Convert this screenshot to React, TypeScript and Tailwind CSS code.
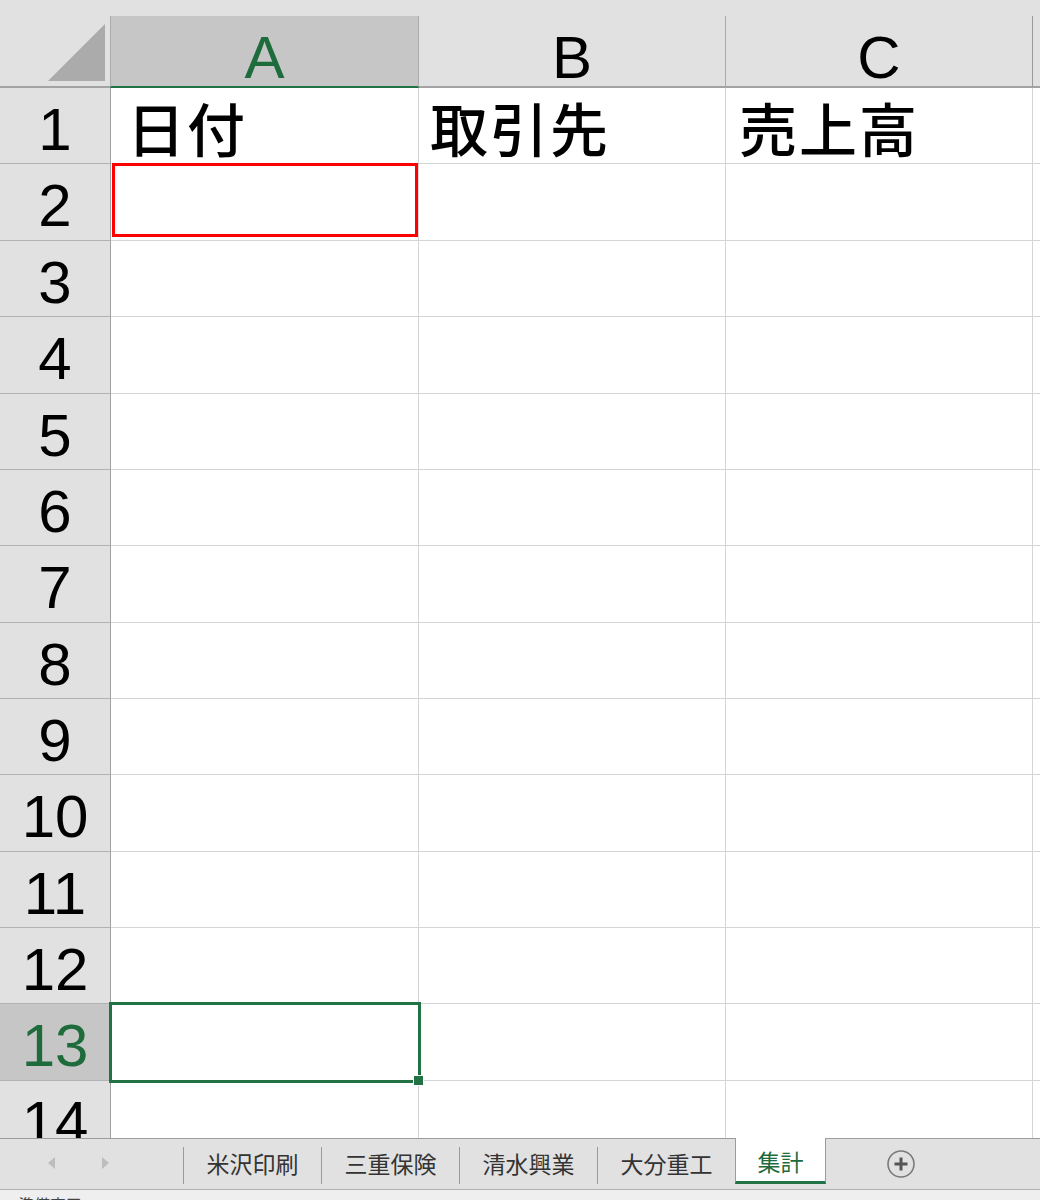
import React from "react";

const rowHeights = [
  "h-[76px]",
  "h-[77px]",
  "h-[76px]",
  "h-[77px]",
  "h-[76px]",
  "h-[76px]",
  "h-[77px]",
  "h-[76px]",
  "h-[76px]",
  "h-[77px]",
  "h-[76px]",
  "h-[76px]",
  "h-[77px]",
  "h-[77px]",
];

const tabs = ["米沢印刷", "三重保険", "清水興業", "大分重工"];

const cjk = "font-['Noto_Sans_CJK_JP',sans-serif]";

function Cell({
  width,
  children,
  overlay,
}: {
  width: string;
  children?: React.ReactNode;
  overlay?: React.ReactNode;
}) {
  return (
    <div
      className={`${width} shrink-0 h-full border-r border-b border-[#d4d4d4] bg-white relative flex items-center pl-[11px] pt-[3px]`}
    >
      {children}
      {overlay}
    </div>
  );
}

const cellText = `${cjk} text-[58px] leading-[66px] font-medium tracking-[2px] text-black whitespace-nowrap`;

export default function App() {
  return (
    <div className="w-[1040px] h-[1200px] overflow-hidden bg-[#e1e1e1] flex flex-col font-['Liberation_Sans',sans-serif]">
      <div className="h-[1138px] shrink-0 overflow-hidden flex flex-col">
        {/* column header row */}
        <div className="flex h-[88px] shrink-0">
          <div className="w-[110px] shrink-0 h-full border-b-2 border-[#a3a3a3] relative">
            <svg
              className="absolute left-0 top-0"
              width="110"
              height="86"
              viewBox="0 0 110 86"
            >
              <polygon points="48,81 105,81 105,24" fill="#ababab" />
            </svg>
          </div>
          <div className="w-[309px] shrink-0 mt-[16px] h-[72px] bg-[#c6c6c6] border-l border-r border-[#ababab] border-b-2 border-b-[#217346] flex items-center justify-center pt-[14px] text-[60px] leading-none text-[#1e6b3c]">
            A
          </div>
          <div className="w-[307px] shrink-0 mt-[16px] h-[72px] border-r border-[#ababab] border-b-2 border-b-[#a3a3a3] flex items-center justify-center pt-[14px] text-[60px] leading-none text-black">
            B
          </div>
          <div className="w-[307px] shrink-0 mt-[16px] h-[72px] border-r border-[#9a9a9a] border-b-2 border-b-[#a3a3a3] flex items-center justify-center pt-[14px] text-[60px] leading-none text-black">
            C
          </div>
          <div className="flex-1 mt-[16px] h-[72px] border-b-2 border-[#a3a3a3]" />
        </div>

        {/* grid body */}
        <div className="flex flex-col">
          {rowHeights.map((h, i) => {
            const n = i + 1;
            const selectedRow = n === 13;
            return (
              <div key={n} className={`flex ${h} shrink-0`}>
                <div
                  className={`w-[111px] shrink-0 h-full border-r border-r-[#9f9f9f] border-b border-b-[#b1b1b1] flex items-center justify-center pt-[8px] text-[60px] leading-none ${
                    selectedRow
                      ? "bg-[#c6c6c6] text-[#1e6b3c]"
                      : "bg-[#e1e1e1] text-black"
                  }`}
                >
                  {n}
                </div>
                <Cell
                  width="w-[308px]"
                  overlay={
                    n === 2 ? (
                      <div className="absolute left-[1px] top-[-1px] w-[306px] h-[74px] border-[3px] border-[#ff0000]" />
                    ) : n === 13 ? (
                      <>
                        <div className="absolute left-[-2px] top-[-2px] w-[312px] h-[81px] border-[3px] border-[#217346] z-10" />
                        <div className="absolute left-[302px] top-[71px] w-[11px] h-[11px] bg-[#217346] border border-white z-20" />
                      </>
                    ) : null
                  }
                >
                  {n === 1 && (
                    <span className={`${cellText} ml-[5px]`}>日付</span>
                  )}
                </Cell>
                <Cell width="w-[307px]">
                  {n === 1 && <span className={cellText}>取引先</span>}
                </Cell>
                <Cell width="w-[307px]">
                  {n === 1 && (
                    <span className={`${cellText} ml-[2px]`}>売上高</span>
                  )}
                </Cell>
                <div className="flex-1 h-full border-b border-[#d4d4d4] bg-white" />
              </div>
            );
          })}
        </div>
      </div>

      {/* sheet tabs */}
      <div
        className={`h-[52px] shrink-0 border-t border-[#9c9c9c] border-b border-b-[#b0b0b0] flex items-start ${cjk}`}
      >
        <div className="w-[183px] shrink-0 h-full flex items-center">
          <svg width="183" height="50" viewBox="0 0 183 50">
            <polygon points="55,18 55,30 48,24" fill="#bdbdbd" />
            <polygon points="102,18 102,30 109,24" fill="#bdbdbd" />
          </svg>
        </div>
        {tabs.map((t) => (
          <div key={t} className="flex h-full items-center shrink-0">
            <div className="w-px h-[37px] bg-[#9a9a9a] mt-[2px]" />
            <div className="w-[137px] h-full flex items-center justify-center pb-[1px] text-[23px] leading-none text-[#333333]">
              {t}
            </div>
          </div>
        ))}
        <div className="w-[91px] shrink-0 h-[46px] mt-[-1px] bg-white border-l border-r border-[#9c9c9c] border-b-[3px] border-b-[#217346] flex items-center justify-center pt-[3px] text-[23px] leading-none text-[#1e6b3c]">
          集計
        </div>
        <div className="flex-1 h-full flex items-center">
          <svg
            className="ml-[60px]"
            width="30"
            height="30"
            viewBox="0 0 30 30"
          >
            <circle
              cx="15"
              cy="15"
              r="13"
              fill="none"
              stroke="#7a7a7a"
              strokeWidth="1.6"
            />
            <path
              d="M15 8.5 V21.5 M8.5 15 H21.5"
              stroke="#555555"
              strokeWidth="3"
            />
          </svg>
        </div>
      </div>

      {/* status bar (cut off) */}
      <div
        className={`h-[10px] shrink-0 bg-[#efefef] overflow-hidden relative ${cjk}`}
      >
        <span className="absolute left-[18px] top-[6px] text-[16px] leading-none text-[#444444]">
          準備完了
        </span>
      </div>
    </div>
  );
}
